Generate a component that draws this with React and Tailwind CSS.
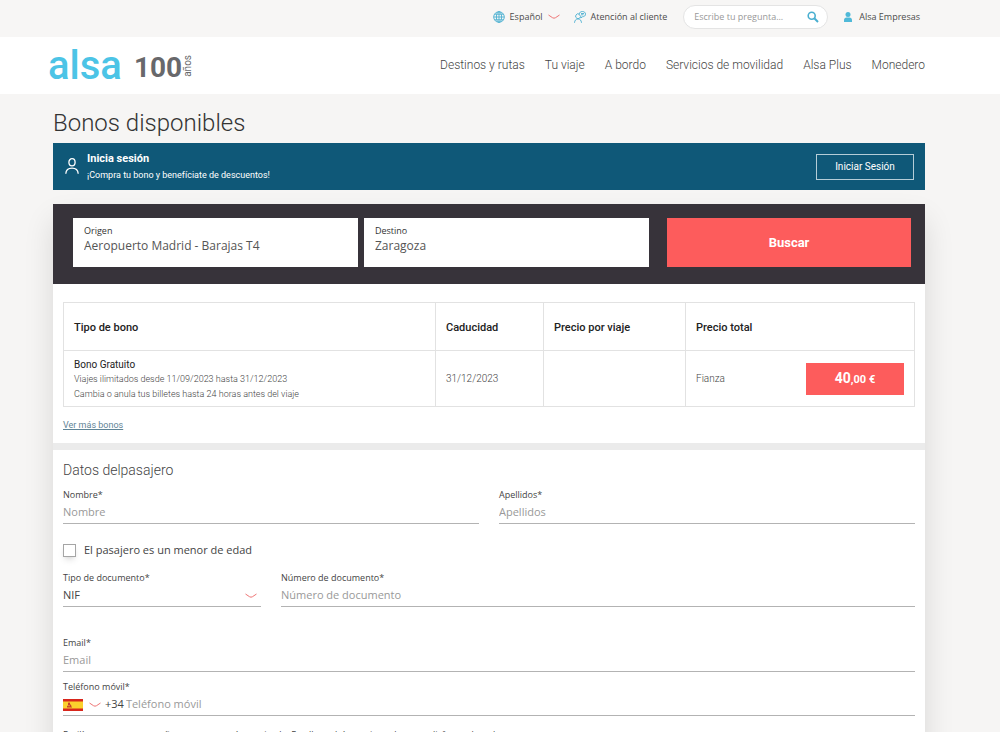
import React, { useState } from 'react';

const brand = 'font-[Roboto,sans-serif]';

const navLinks = ['Destinos y rutas', 'Tu viaje', 'A bordo', 'Servicios de movilidad', 'Alsa Plus', 'Monedero'];

const passes = [
  {
    id: 1,
    name: 'Bono Gratuito',
    detail: 'Viajes ilimitados desde 11/09/2023 hasta 31/12/2023',
    conditions: 'Cambia o anula tus billetes hasta 24 horas antes del viaje',
    expiry: '31/12/2023',
    perTrip: '',
    priceLabel: 'Fianza',
    euros: '40',
    cents: ',00 €'
  }
];

const Chevron = () => (
  <svg width="12" height="8" viewBox="0 0 12 8" fill="none" stroke="#ee7474" className="shrink-0" aria-hidden="true">
    <path d="M.5 2l4 2.700q1.500 1 3 0l4-2.700" />
  </svg>
);

const GlobeIcon = () => (
  <svg width="12" height="12" viewBox="0 0 12 12" fill="none" stroke="#4aafd0" strokeWidth="0.9" aria-hidden="true">
    <circle cx="6" cy="6" r="5.300" />
    <ellipse cx="6" cy="6" rx="2.600" ry="5.300" />
    <path d="M6 .7v10.600M.7 6h10.600M1.500 3.200h9M1.500 8.800h9" />
  </svg>
);

const SupportIcon = () => (
  <svg width="12" height="12" viewBox="0 0 12 12" fill="none" stroke="#4aafd0" strokeWidth="0.9" aria-hidden="true">
    <path d="M5.300 3.200A2.400 2.400 0 1 0 6.300 6" />
    <path d="M.5 11.800C.7 9.300 2 7.900 4 7.900s3.300 1.400 3.500 3.900" />
    <path d="M5.200 3C5.400 1.400 6.700.5 8.400.5c1.800 0 3.100 1 3.100 2.600S10.300 5.700 8.600 5.700L6.800 7V5.200C5.800 4.800 5.200 4 5.200 3z" />
    <path d="M7 2.500h3M7 3.800h2.500" />
  </svg>
);

const SearchIcon = () => (
  <svg width="12" height="12" viewBox="0 0 12 12" fill="none" stroke="#4aafd0" strokeWidth="1.600" aria-hidden="true">
    <circle cx="4.700" cy="4.700" r="3.500" />
    <path d="M7.300 7.300l3.700 3.700" strokeWidth="2" />
  </svg>
);

const CompanyIcon = () => (
  <svg width="8" height="10" viewBox="0 0 8 10" fill="#4fb9d8" aria-hidden="true">
    <circle cx="4" cy="2.500" r="2.500" />
    <path d="M0 10V8.200C0 6.500 1.200 5.600 2.500 5.600h3C6.800 5.600 8 6.500 8 8.200V10z" />
  </svg>
);

const UserIcon = () => (
  <svg width="14" height="18" viewBox="0 0 14 18" fill="none" stroke="#fff" strokeWidth="1.300" aria-hidden="true">
    <ellipse cx="7" cy="4.300" rx="3.100" ry="3.600" />
    <path d="M.8 15.800C1 12.300 3.600 10.200 7 10.200s6 2.100 6.200 5.600" />
  </svg>
);

const SpainFlag = () => (
  <svg width="20" height="12" viewBox="0 0 20 12" className="shrink-0" aria-hidden="true">
    <path fill="#d8261c" d="M0 0h20v12H0z" />
    <path fill="#fbd02d" d="M0 2.500h20v7H0z" />
    <path fill="#c8402c" d="M4 8.500V7l1-.5V4l1-.7 1 .7v1l1.500 1.500-.5.500 1 1v.5z" />
    <path fill="#fbd02d" d="M5.500 6h1v1.300h-1z" />
  </svg>
);

const TopBar = () => (
  <div className="flex h-[37px] items-center justify-end bg-[#f7f6f5] pr-20 pb-[3px] text-[9px] text-[#4b4b4b]">
    <button type="button" className="mr-3.5 flex items-center gap-[5px]">
      <GlobeIcon />
      <span>Español</span>
      <Chevron />
    </button>
    <a href="#ayuda" className="mr-4 flex items-center gap-[5px]">
      <SupportIcon />
      <span>Atención al cliente</span>
    </a>
    <form
      className="mr-4 flex h-6 w-[145px] items-center rounded-full border border-[#e4e4e4] bg-white pr-2 pl-2.5"
      onSubmit={(e) => e.preventDefault()}
    >
      <input
        type="text"
        aria-label="Escribe tu pregunta"
        placeholder="Escribe tu pregunta..."
        className="min-w-0 flex-1 outline-none placeholder:text-[#999]"
      />
      <button type="submit" aria-label="Buscar ayuda">
        <SearchIcon />
      </button>
    </form>
    <a href="#empresas" className="flex items-center gap-[7px]">
      <CompanyIcon />
      <span>Alsa Empresas</span>
    </a>
  </div>
);

const Header = () => (
  <header className={`flex h-[57px] items-center justify-between bg-white pr-[75px] pl-12 ${brand}`}>
    <a href="#inicio" className="flex items-center">
      <span className="text-[40px] leading-10 font-medium text-[#4cc4e6]">alsa</span>
      <span className="ml-3 pt-1 text-[28px] leading-8 font-bold text-[#68686b]">100</span>
      <span className="rotate-180 text-[10px] leading-3 text-[#68686b] [writing-mode:vertical-rl]">años</span>
    </a>
    <nav className="flex gap-5 pb-0.5 text-[12px] text-[#444] font-light">
      {navLinks.map((link) => (
        <a key={link} href="#menu" className="whitespace-nowrap">{link}</a>
      ))}
    </nav>
  </header>
);

const LoginBanner = () => (
  <section className={`flex h-[47px] items-center bg-[#0f5878] pr-[11px] pl-3 text-white ${brand}`}>
    <UserIcon />
    <div className="ml-2 flex-1">
      <p className="text-[11px] leading-4 font-bold">Inicia sesión</p>
      <p className="text-[9px] leading-4">¡Compra tu bono y benefíciate de descuentos!</p>
    </div>
    <button type="button" className="h-[26px] w-[98px] border border-[#b5cdd7] text-[10px]">
      Iniciar Sesión
    </button>
  </section>
);

const RouteInput = ({ id, label, value }) => (
  <div className="flex h-[49px] flex-1 flex-col justify-center bg-white px-[11px] pb-1.5">
    <label htmlFor={id} className="text-[9px] leading-3 text-[#333] font-medium">{label}</label>
    <input id={id} defaultValue={value} className="h-[18px] w-full text-[12px] text-[#555] outline-none" />
  </div>
);

const SearchForm = () => (
  <form
    className="flex h-20 items-center bg-[#37333a] pr-3.5 pb-[3px] pl-5"
    onSubmit={(e) => e.preventDefault()}
  >
    <div className="mr-[18px] flex flex-1 gap-1.5">
      <RouteInput id="origen" label="Origen" value="Aeropuerto Madrid - Barajas T4" />
      <RouteInput id="destino" label="Destino" value="Zaragoza" />
    </div>
    <button type="submit" className={`h-[49px] w-[244px] bg-[#fd5c5c] text-[13px] font-bold text-white ${brand}`}>
      Buscar
    </button>
  </form>
);

const PassTable = () => (
  <table className={`w-full table-fixed border-collapse text-left ${brand}`}>
    <colgroup>
      <col className="w-[372px]" />
      <col className="w-[108px]" />
      <col className="w-[142px]" />
      <col />
    </colgroup>
    <thead>
      <tr className="h-12 text-[11px] text-[#222]">
        {['Tipo de bono', 'Caducidad', 'Precio por viaje', 'Precio total'].map((title) => (
          <th key={title} className="border border-[#e2e2e2] px-2.5 pt-1 font-medium">{title}</th>
        ))}
      </tr>
    </thead>
    <tbody>
      {passes.map((pass) => (
        <tr key={pass.id} className="h-14 text-[10px] text-[#444] font-light">
          <td className="border border-[#e2e2e2] px-2.5 pt-0.5 leading-[15px]">
            <p className="text-[10px] text-[#222] font-normal">{pass.name}</p>
            <p className="text-[9px]">{pass.detail}</p>
            <p className="text-[9px]">{pass.conditions}</p>
          </td>
          <td className="border border-[#e2e2e2] px-2.5">{pass.expiry}</td>
          <td className="border border-[#e2e2e2] px-2.5">{pass.perTrip}</td>
          <td className="border border-[#e2e2e2] px-2.5">
            <div className="flex items-center justify-between">
              <span>{pass.priceLabel}</span>
              <button type="button" className="h-8 w-[98px] bg-[#fd5c5c] text-[11px] font-bold text-white">
                <span className="text-[14px]">{pass.euros}</span>
                {pass.cents}
              </button>
            </div>
          </td>
        </tr>
      ))}
    </tbody>
  </table>
);

const Field = ({ id, label, type = 'text', className = '' }) => (
  <div className={className}>
    <label htmlFor={id} className="block text-[9px] leading-[14px] text-[#444]">{label}*</label>
    <input
      id={id}
      type={type}
      placeholder={label}
      className="block h-[22px] w-full border-b border-[#b3b3b3] pb-0.5 text-[11px] text-[#444] outline-none placeholder:text-[#999]"
    />
  </div>
);

const PassengerForm = () => {
  const [isMinor, setIsMinor] = useState(false);
  const [docType, setDocType] = useState('NIF');

  return (
    <form className="px-2.5 pt-1.5 pb-3">
      <h2 className={`mb-1 text-[14px] leading-7 text-[#444] font-light ${brand}`}>Datos delpasajero</h2>

      <div className="flex gap-5">
        <Field id="nombre" label="Nombre" className="flex-1" />
        <Field id="apellidos" label="Apellidos" className="flex-1" />
      </div>

      <label className="mt-[18px] mb-3 flex h-[17px] items-center gap-2 text-[11px] text-[#444]">
        <input
          type="checkbox"
          checked={isMinor}
          onChange={(e) => setIsMinor(e.target.checked)}
          className="size-[13px] appearance-none border border-[#a5a5a5] bg-white shadow-md checked:bg-[#4cc4e6]"
        />
        El pasajero es un menor de edad
      </label>

      <div className="flex gap-5">
        <div className="w-[198px]">
          <label htmlFor="tipo" className="block text-[9px] leading-[14px] text-[#444]">Tipo de documento*</label>
          <div className="flex h-[22px] items-center border-b border-[#b3b3b3] pr-1">
            <select
              id="tipo"
              value={docType}
              onChange={(e) => setDocType(e.target.value)}
              className="flex-1 appearance-none text-[11px] text-[#444] outline-none"
            >
              <option>NIF</option>
              <option>NIE</option>
              <option>Pasaporte</option>
            </select>
            <Chevron />
          </div>
        </div>
        <Field id="numero" label="Número de documento" className="flex-1" />
      </div>

      <Field id="email" label="Email" type="email" className="mt-[29px]" />

      <div className="mt-2">
        <label htmlFor="telefono" className="block text-[9px] leading-[14px] text-[#444]">Teléfono móvil*</label>
        <div className="flex h-[22px] items-center border-b border-[#b3b3b3] text-[11px] text-[#444]">
          <button type="button" aria-label="Prefijo: España" className="mr-1 flex items-center gap-1.5">
            <SpainFlag />
            <Chevron />
          </button>
          <span className="mr-0.5">+34</span>
          <input
            id="telefono"
            type="tel"
            placeholder="Teléfono móvil"
            className="min-w-0 flex-1 outline-none placeholder:text-[#999]"
          />
        </div>
      </div>

      <p className="mt-3 text-[9px] leading-[14px] text-[#444]">
        Facilítanos una contraseña para crear tu área privada. En ella podrás gestionar bonos y disfrutar de todo
      </p>
    </form>
  );
};

export default function App() {
  return (
    <div className="bg-[#f6f5f4] font-['Open_Sans','Noto_Sans',sans-serif]">
      <TopBar />
      <Header />
      <main className="pr-[75px] pl-[53px] pt-[13px]">
        <h1 className={`mb-1 text-[24px] leading-8 font-light text-[#333] ${brand}`}>Bonos disponibles</h1>
        <LoginBanner />
        <div className="mt-3.5 bg-[#ebebeb] shadow-[0_16px_28px_rgba(0,0,0,0.12)]">
          <SearchForm />
          <section className="bg-white px-2.5 pt-[18px] pb-[9px]">
            <PassTable />
            <a href="#bonos" className={`mt-2.5 inline-block text-[9px] leading-4 text-[#5f8496] underline ${brand}`}>
              Ver más bonos
            </a>
          </section>
          <section className="mt-[7px] bg-white">
            <PassengerForm />
          </section>
        </div>
      </main>
    </div>
  );
}
